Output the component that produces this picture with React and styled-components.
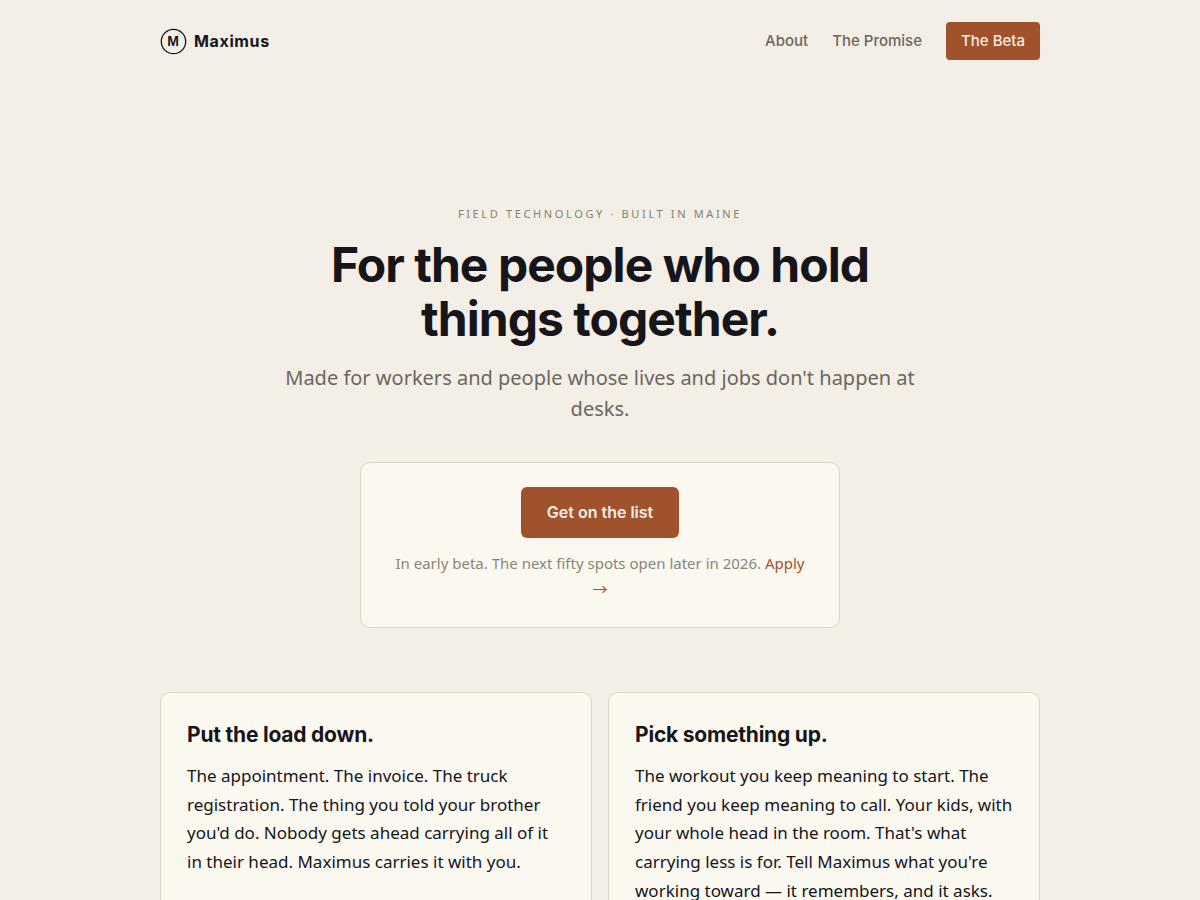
import styled, { createGlobalStyle } from "styled-components";

const cards = [
  {
    title: "Put the load down.",
    text: "The appointment. The invoice. The truck registration. The thing you told your brother you'd do. Nobody gets ahead carrying all of it in their head. Maximus carries it with you.",
  },
  {
    title: "Pick something up.",
    text: "The workout you keep meaning to start. The friend you keep meaning to call. Your kids, with your whole head in the room. That's what carrying less is for. Tell Maximus what you're working toward — it remembers, and it asks.",
  },
];

export default function App() {
  return (
    <>
      <GlobalStyle />
      <Header>
        <Brand href="#">
          <Logo />
          Maximus
        </Brand>
        <Nav>
          <NavLink href="#about">About</NavLink>
          <NavLink href="#promise">The Promise</NavLink>
          <NavButton href="#beta">The Beta</NavButton>
        </Nav>
      </Header>
      <main>
        <Hero>
          <Eyebrow>Field technology · Built in Maine</Eyebrow>
          <Title>For the people who hold things together.</Title>
          <Lede>
            Made for workers and people whose lives and jobs don't happen at
            desks.
          </Lede>
          <Signup>
            <SignupButton type="button">Get on the list</SignupButton>
            <Note>
              In early beta. The next fifty spots open later in 2026.{" "}
              <NoteLink href="#apply">Apply →</NoteLink>
            </Note>
          </Signup>
        </Hero>
        <Cards>
          {cards.map((card) => (
            <Card key={card.title}>
              <CardTitle>{card.title}</CardTitle>
              <CardText>{card.text}</CardText>
            </Card>
          ))}
        </Cards>
      </main>
    </>
  );
}

function Logo() {
  return (
    <svg width="27" height="27" viewBox="0 0 27 27" aria-hidden="true">
      <circle cx="13.5" cy="13.5" r="12.2" fill="none" stroke="#15151a" strokeWidth="1.3" />
      <text
        x="13.5"
        y="18.2"
        textAnchor="middle"
        fontFamily="'Liberation Sans', sans-serif"
        fontSize="14"
        fontWeight="700"
        fill="#15151a"
      >
        M
      </text>
    </svg>
  );
}

const GlobalStyle = createGlobalStyle`
  * {
    box-sizing: border-box;
  }
  html {
    scrollbar-width: none;
  }
  body {
    margin: 0;
    background: #f3eee6;
    color: #15151a;
    font-family: "Noto Sans", "Noto Sans CJK SC", sans-serif;
    font-size: 17px;
    line-height: 1.7;
  }
`;

const Header = styled.header`
  display: flex;
  align-items: center;
  justify-content: space-between;
  max-width: 928px;
  margin: 0 auto;
  padding: 22px 24px;
`;

const Brand = styled.a`
  display: flex;
  align-items: center;
  gap: 7px;
  color: #15151a;
  font-family: Inter, sans-serif;
  font-size: 16px;
  font-weight: 700;
  line-height: 27px;
  letter-spacing: 0.04em;
  text-decoration: none;
`;

const Nav = styled.nav`
  display: flex;
  align-items: center;
  gap: 24px;
`;

const NavLink = styled.a`
  color: #6b665f;
  font-family: Inter, sans-serif;
  font-size: 15px;
  font-weight: 500;
  line-height: 22px;
  text-decoration: none;
`;

const NavButton = styled(NavLink)`
  padding: 8px 15px;
  border-radius: 4px;
  background: #a0522d;
  color: #f3eee6;
`;

const Hero = styled.section`
  display: flex;
  flex-direction: column;
  align-items: center;
  max-width: 728px;
  margin: 0 auto;
  padding: 122px 24px 64px;
  text-align: center;
`;

const Eyebrow = styled.p`
  margin: 0 0 14px;
  color: #7d8577;
  font-size: 11px;
  line-height: 20px;
  letter-spacing: 0.24em;
  text-transform: uppercase;
`;

const Title = styled.h1`
  max-width: 640px;
  margin: 0 0 16px;
  font-family: Inter, sans-serif;
  font-size: 48px;
  font-weight: 700;
  line-height: 54px;
  letter-spacing: -0.02em;
`;

const Lede = styled.p`
  max-width: 640px;
  margin: 0 0 38px;
  color: #6b665f;
  font-size: 20px;
  line-height: 31px;
`;

const Signup = styled.div`
  width: 100%;
  max-width: 480px;
  padding: 24px 28px 25px;
  border: 1px solid #dad5c8;
  border-radius: 10px;
  background: #fbf8f0;
`;

const SignupButton = styled.button`
  padding: 14px 26px;
  border: 0;
  border-radius: 6px;
  background: #a0522d;
  color: #f3eee6;
  font-family: Inter, sans-serif;
  font-size: 16px;
  font-weight: 600;
  line-height: 23px;
  cursor: pointer;
`;

const Note = styled.p`
  margin: 12px 0 0;
  color: #8a857a;
  font-size: 15px;
  line-height: 26px;
`;

const NoteLink = styled.a`
  color: #a0522d;
  text-decoration: none;
`;

const Cards = styled.section`
  display: grid;
  grid-template-columns: repeat(auto-fit, minmax(300px, 1fr));
  gap: 16px;
  max-width: 928px;
  margin: 0 auto;
  padding: 0 24px 64px;
`;

const Card = styled.article`
  padding: 25px 26px;
  border: 1px solid #dad5c8;
  border-radius: 10px;
  background: #fbf8f0;
`;

const CardTitle = styled.h2`
  margin: 0 0 10px;
  font-family: Inter, sans-serif;
  font-size: 21px;
  font-weight: 700;
  line-height: 34px;
  letter-spacing: -0.01em;
`;

const CardText = styled.p`
  margin: 0;
  font-size: 17px;
  line-height: 1.69;
`;
